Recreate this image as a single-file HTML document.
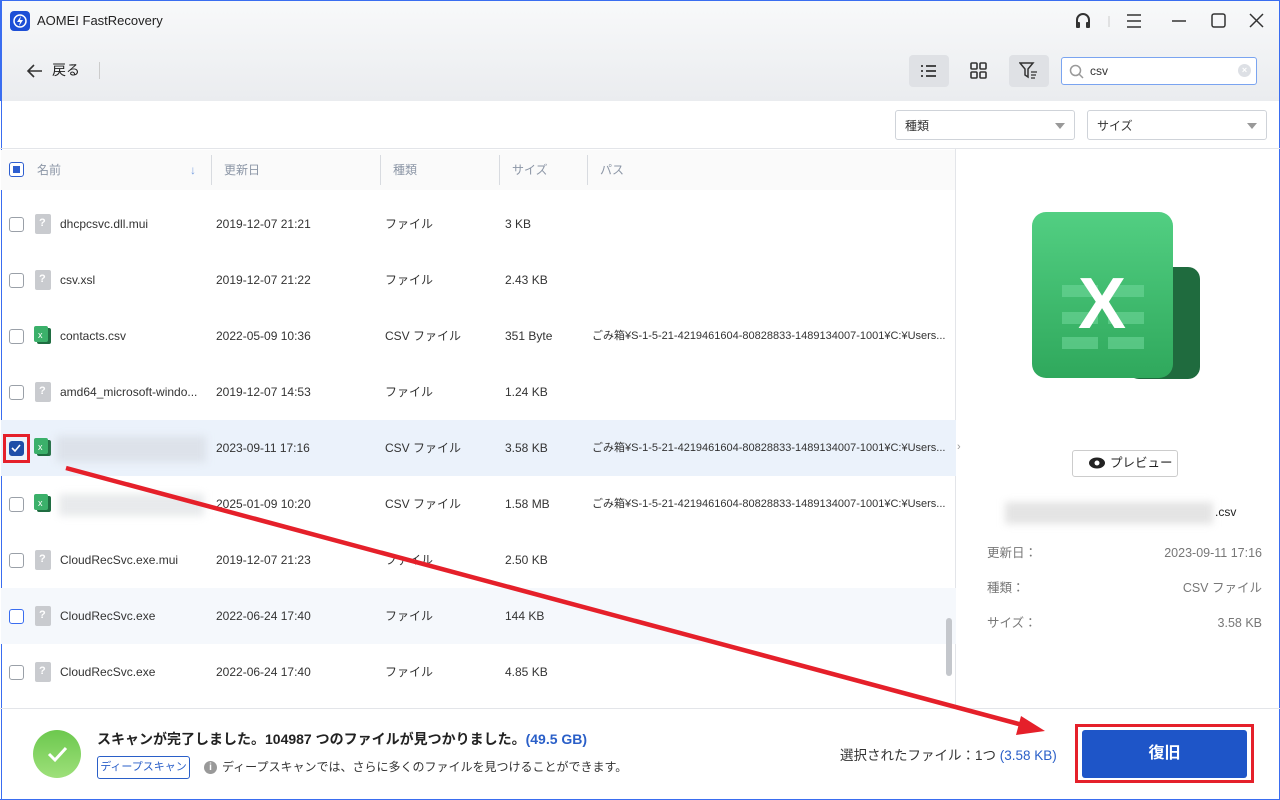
<!DOCTYPE html>
<html><head><meta charset="utf-8"><style>
*{box-sizing:border-box;margin:0;padding:0}
body{width:1280px;height:800px;overflow:hidden;font-family:"Liberation Sans","Noto Sans CJK JP",sans-serif;background:#fff;position:relative;font-size:12px;color:#333;line-height:1.2}
.abs{position:absolute}
.top{left:0;top:0;width:1280px;height:101px;background:linear-gradient(#f8f9fa,#eaecef);border-top:1px solid #3a6df0;border-left:1px solid #3a6df0;border-right:1px solid #3a6df0}
.cb{position:absolute;width:15px;height:15px;border:1.5px solid #9aa0a8;border-radius:3px;background:#fff}
.row{position:absolute;left:1px;width:955px;height:56px}
.row span{position:absolute;top:21px;font-size:12px;line-height:14px;height:14px;color:#333;white-space:nowrap}
.fi{position:absolute;left:34px;top:18px;width:16px;height:20px;background:#c9cbcf;border-radius:2px}
.fi:after{content:"?";position:absolute;left:4px;top:3px;color:#fff;font-size:11px;font-weight:bold}
.xi{position:absolute;left:33px;top:17px;width:18px;height:20px}
.hdr span{position:absolute;top:13px;color:#8c96a6;font-size:12px;line-height:14px}
.sep{position:absolute;top:5px;width:1px;height:30px;background:#d8dbe0}
.sel{position:absolute;height:30px;border:1px solid #cfd3d9;border-radius:3px;background:#fff}
.sel span{position:absolute;left:9px;top:8px;font-size:12px;line-height:14px}
.sel i{position:absolute;right:9px;top:12px;border-left:5px solid transparent;border-right:5px solid transparent;border-top:6px solid #999}
.lbl{position:absolute;font-size:12.5px;line-height:15px;color:#777}
</style></head><body>
<div class="abs top"></div>
<div class="abs" style="left:1px;top:0;width:1px;height:800px;background:#3a6df0"></div>
<div class="abs" style="right:0;top:0;width:1px;height:800px;background:#3a6df0"></div>
<div class="abs" style="left:0;bottom:0;width:1280px;height:1px;background:#3a6df0"></div>
<div class="abs" style="left:10px;top:11px;width:20px;height:20px;background:#1d4fd6;border-radius:4px"><svg width="20" height="20"><circle cx="10" cy="10" r="6" fill="none" stroke="#fff" stroke-width="1.5"/><path d="M11 5L7 11h3l-1 4 4-6h-3z" fill="#fff"/></svg></div>
<div class="abs" style="left:37px;top:13px;font-size:13px;color:#222">AOMEI FastRecovery</div>
<svg class="abs" style="left:1072px;top:10px" width="200" height="22"><path d="M5 13v-3a6 6 0 0 1 12 0v3" fill="none" stroke="#333" stroke-width="2"/><rect x="4" y="12" width="4" height="6" rx="1" fill="#333"/><rect x="14" y="12" width="4" height="6" rx="1" fill="#333"/><line x1="37" y1="6" x2="37" y2="17" stroke="#ccc"/><path d="M55 5h14M55 11h14M55 17h14" stroke="#333" stroke-width="1.5"/><line x1="100" y1="11" x2="114" y2="11" stroke="#333" stroke-width="1.5"/><rect x="140" y="4" width="13" height="13" rx="2" fill="none" stroke="#333" stroke-width="1.5"/><path d="M178 4l13 13M191 4l-13 13" stroke="#333" stroke-width="1.5"/></svg>
<svg class="abs" style="left:26px;top:62px" width="18" height="18"><path d="M16 9H3M8 3L2 9l6 6" fill="none" stroke="#333" stroke-width="1.6"/></svg>
<div class="abs" style="left:52px;top:62px;font-size:14px;line-height:17px;color:#222">戻る</div>
<div class="abs" style="left:99px;top:62px;width:1px;height:17px;background:#ccc"></div>
<div class="abs" style="left:909px;top:55px;width:40px;height:32px;background:#dfe1e5;border-radius:4px"></div>
<svg class="abs" style="left:919px;top:63px" width="20" height="16"><path d="M2 3h2M2 8h2M2 13h2M7 3h10M7 8h10M7 13h10" stroke="#333" stroke-width="1.8"/></svg>
<svg class="abs" style="left:970px;top:62px" width="18" height="18"><rect x="1" y="1" width="6" height="6" rx="1" fill="none" stroke="#333" stroke-width="1.6"/><rect x="10" y="1" width="6" height="6" rx="1" fill="none" stroke="#333" stroke-width="1.6"/><rect x="1" y="10" width="6" height="6" rx="1" fill="none" stroke="#333" stroke-width="1.6"/><rect x="10" y="10" width="6" height="6" rx="1" fill="none" stroke="#333" stroke-width="1.6"/></svg>
<div class="abs" style="left:1009px;top:55px;width:40px;height:32px;background:#dfe1e5;border-radius:4px"></div>
<svg class="abs" style="left:1019px;top:62px" width="20" height="18"><path d="M1 1h13l-5 6v8l-3-2V7z" fill="none" stroke="#333" stroke-width="1.5"/><path d="M12 10h6M12 13h5M12 16h4" stroke="#333" stroke-width="1.3"/></svg>
<div class="abs" style="left:1061px;top:57px;width:196px;height:28px;background:#fff;border:1.5px solid #7aa4f0;border-radius:3px"></div>
<svg class="abs" style="left:1069px;top:64px" width="16" height="16"><circle cx="6.5" cy="6.5" r="5" fill="none" stroke="#999" stroke-width="1.5"/><path d="M10 10l4 4" stroke="#999" stroke-width="1.5"/></svg>
<div class="abs" style="left:1090px;top:64px;font-size:12px">csv</div>
<div class="abs" style="left:1238px;top:64px;width:13px;height:13px;border-radius:50%;background:#dde0e5;color:#fff;font-size:9px;text-align:center;line-height:13px;font-weight:bold">×</div>
<div class="sel" style="left:895px;top:110px;width:180px"><span>種類</span><i></i></div>
<div class="sel" style="left:1087px;top:110px;width:180px"><span>サイズ</span><i></i></div>
<div class="abs" style="left:0;top:148px;width:1280px;height:1px;background:#e3e5e9"></div>
<div class="abs hdr" style="left:1px;top:150px;width:955px;height:40px;background:#fafafa">
<div class="cb" style="left:8px;top:12px;border-color:#2f5fd0"><div style="position:absolute;left:2.5px;top:2.5px;width:7px;height:7px;background:#2f5fd0"></div></div>
<span style="left:36px">名前</span><span style="left:189px;color:#7aa0e0">↓</span><div class="sep" style="left:210px"></div>
<span style="left:223px">更新日</span><div class="sep" style="left:379px"></div>
<span style="left:392px">種類</span><div class="sep" style="left:498px"></div>
<span style="left:511px">サイズ</span><div class="sep" style="left:586px"></div>
<span style="left:599px">パス</span></div>
<div class="abs" style="left:955px;top:148px;width:1px;height:560px;background:#e3e5e9"></div>
<div class="row" style="top:196px"><div class="cb" style="left:8px;top:21px"></div><div class="fi"></div><span style="left:59px">dhcpcsvc.dll.mui</span><span style="left:215px">2019-12-07 21:21</span><span style="left:384px">ファイル</span><span style="left:504px">3 KB</span></div>
<div class="row" style="top:252px"><div class="cb" style="left:8px;top:21px"></div><div class="fi"></div><span style="left:59px">csv.xsl</span><span style="left:215px">2019-12-07 21:22</span><span style="left:384px">ファイル</span><span style="left:504px">2.43 KB</span></div>
<div class="row" style="top:308px"><div class="cb" style="left:8px;top:21px"></div><svg class="xi"><rect x="3" y="3" width="14" height="16" rx="2" fill="#1f6d41"/><rect x="0" y="1" width="14" height="16" rx="2" fill="#3bb06a"/><text x="4" y="13" font-size="9" fill="#fff" font-family="Liberation Sans">x</text></svg><span style="left:59px">contacts.csv</span><span style="left:215px">2022-05-09 10:36</span><span style="left:384px">CSV ファイル</span><span style="left:504px">351 Byte</span><span style="left:591px;font-size:11px">ごみ箱¥S-1-5-21-4219461604-80828833-1489134007-1001¥C:¥Users...</span></div>
<div class="row" style="top:364px"><div class="cb" style="left:8px;top:21px"></div><div class="fi"></div><span style="left:59px">amd64_microsoft-windo...</span><span style="left:215px">2019-12-07 14:53</span><span style="left:384px">ファイル</span><span style="left:504px">1.24 KB</span></div>
<div class="row" style="top:420px;background:#ebf2fb"><div class="cb" style="left:8px;top:21px;background:#1f4ea8;border-color:#1f4ea8"><svg width="12" height="12" style="position:absolute;left:0;top:0"><path d="M2 6l3 3 5-6" fill="none" stroke="#fff" stroke-width="1.6"/></svg></div><svg class="xi"><rect x="3" y="3" width="14" height="16" rx="2" fill="#1f6d41"/><rect x="0" y="1" width="14" height="16" rx="2" fill="#3bb06a"/><text x="4" y="13" font-size="9" fill="#fff" font-family="Liberation Sans">x</text></svg><div style="position:absolute;left:55px;top:16px;width:150px;height:26px;background:#dde2ea;filter:blur(4px)"></div><span style="left:215px">2023-09-11 17:16</span><span style="left:384px">CSV ファイル</span><span style="left:504px">3.58 KB</span><span style="left:591px;font-size:11px">ごみ箱¥S-1-5-21-4219461604-80828833-1489134007-1001¥C:¥Users...</span></div>
<div class="row" style="top:476px"><div class="cb" style="left:8px;top:21px"></div><svg class="xi"><rect x="3" y="3" width="14" height="16" rx="2" fill="#1f6d41"/><rect x="0" y="1" width="14" height="16" rx="2" fill="#3bb06a"/><text x="4" y="13" font-size="9" fill="#fff" font-family="Liberation Sans">x</text></svg><div style="position:absolute;left:58px;top:18px;width:145px;height:22px;background:#e8eaec;filter:blur(4px)"></div><span style="left:215px">2025-01-09 10:20</span><span style="left:384px">CSV ファイル</span><span style="left:504px">1.58 MB</span><span style="left:591px;font-size:11px">ごみ箱¥S-1-5-21-4219461604-80828833-1489134007-1001¥C:¥Users...</span></div>
<div class="row" style="top:532px"><div class="cb" style="left:8px;top:21px"></div><div class="fi"></div><span style="left:59px">CloudRecSvc.exe.mui</span><span style="left:215px">2019-12-07 21:23</span><span style="left:384px">ファイル</span><span style="left:504px">2.50 KB</span></div>
<div class="row" style="top:588px;background:#f5f8fc"><div class="cb" style="left:8px;top:21px;border-color:#3a6df0"></div><div class="fi"></div><span style="left:59px">CloudRecSvc.exe</span><span style="left:215px">2022-06-24 17:40</span><span style="left:384px">ファイル</span><span style="left:504px">144 KB</span></div>
<div class="row" style="top:644px"><div class="cb" style="left:8px;top:21px"></div><div class="fi"></div><span style="left:59px">CloudRecSvc.exe</span><span style="left:215px">2022-06-24 17:40</span><span style="left:384px">ファイル</span><span style="left:504px">4.85 KB</span></div>
<div class="abs" style="left:946px;top:618px;width:6px;height:58px;background:#c4c7cc;border-radius:3px"></div>
<div class="abs" style="left:957px;top:441px;color:#999;font-size:11px">›</div>
<svg class="abs" style="left:1032px;top:210px" width="170" height="170"><defs><linearGradient id="g" x1="0" y1="0" x2="0" y2="1"><stop offset="0" stop-color="#52cf82"/><stop offset="1" stop-color="#2fa85c"/></linearGradient></defs><rect x="95" y="57" width="73" height="112" rx="12" fill="#1f6b3e"/><rect x="0" y="2" width="141" height="166" rx="14" fill="url(#g)"/><g fill="#6ed699" opacity=".6"><rect x="30" y="75" width="36" height="12"/><rect x="76" y="75" width="36" height="12"/><rect x="30" y="102" width="36" height="12"/><rect x="76" y="102" width="36" height="12"/><rect x="30" y="127" width="36" height="12"/><rect x="76" y="127" width="36" height="12"/></g><text x="70" y="118" text-anchor="middle" font-size="72" font-weight="bold" fill="#fff" font-family="Liberation Sans">X</text></svg>
<div class="abs" style="left:1072px;top:450px;width:106px;height:27px;border:1px solid #ccc;border-radius:3px;background:#fff"></div>
<svg class="abs" style="left:1089px;top:457px" width="18" height="12"><ellipse cx="8" cy="6" rx="8" ry="5.5" fill="#222"/><circle cx="8" cy="6" r="2.5" fill="#fff"/></svg>
<div class="abs" style="left:1110px;top:456px;font-size:12.5px;line-height:15px;color:#222">プレビュー</div>
<div class="abs" style="left:1005px;top:502px;width:208px;height:22px;background:#e4e4e4;filter:blur(4px)"></div>
<div class="abs" style="left:1215px;top:505px;font-size:12px;line-height:14px;color:#222">.csv</div>
<div class="lbl" style="left:987px;top:546px">更新日：</div><div class="lbl" style="right:18px;top:546px">2023-09-11 17:16</div>
<div class="lbl" style="left:987px;top:581px">種類：</div><div class="lbl" style="right:18px;top:581px">CSV ファイル</div>
<div class="lbl" style="left:987px;top:616px">サイズ：</div><div class="lbl" style="right:18px;top:616px">3.58 KB</div>
<div class="abs" style="left:0;top:708px;width:1280px;height:1px;background:#e3e5e9"></div>
<div class="abs" style="left:33px;top:730px;width:48px;height:48px;border-radius:50%;background:linear-gradient(#6cc84e,#9ee07a)"><svg width="48" height="48"><path d="M16 24l6 6 11-12" fill="none" stroke="#fff" stroke-width="3"/></svg></div>
<div class="abs" style="left:97px;top:731px;font-size:14px;line-height:17px;color:#222;font-weight:bold">スキャンが完了しました。104987 つのファイルが見つかりました。<span style="color:#2a5fc8">(49.5 GB)</span></div>
<div class="abs" style="left:97px;top:756px;width:93px;height:23px;border:1px solid #2a5fc8;border-radius:3px;color:#2a5fc8;font-size:11px;text-align:center;line-height:21px;white-space:nowrap">ディープスキャン</div>
<div class="abs" style="left:204px;top:761px;width:13px;height:13px;border-radius:50%;background:#999;color:#fff;font-size:10px;text-align:center;line-height:13px;font-weight:bold">i</div>
<div class="abs" style="left:222px;top:760px;font-size:12px;line-height:15px;color:#333">ディープスキャンでは、さらに多くのファイルを見つけることができます。</div>
<div class="abs" style="left:840px;top:747px;font-size:13.5px;line-height:17px;color:#333">選択されたファイル：1つ <span style="color:#2a5fc8">(3.58 KB)</span></div>
<div class="abs" style="left:1082px;top:730px;width:165px;height:48px;background:#1e55c8;border-radius:3px;color:#fff;font-size:16px;font-weight:bold;text-align:center;line-height:48px">復旧</div>
<div class="abs" style="left:3px;top:434px;width:27px;height:29px;border:3px solid #e5202a"></div>
<div class="abs" style="left:1075px;top:724px;width:179px;height:59px;border:3px solid #e5202a"></div>
<svg class="abs" style="left:0;top:0" width="1280" height="800"><line x1="66" y1="468" x2="1030" y2="727" stroke="#e5202a" stroke-width="4.5"/><path d="M1045 731l-24 -15 -5 19z" fill="#e5202a"/></svg>
</body></html>
